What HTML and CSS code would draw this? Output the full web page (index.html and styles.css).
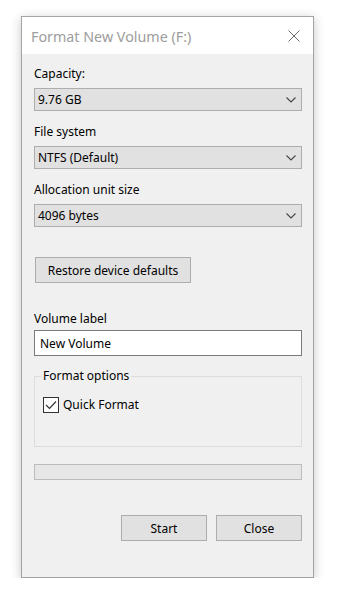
FILE: index.html
```html
<!DOCTYPE html>
<html>
<head>
<meta charset="utf-8">
<link rel="stylesheet" href="styles.css">
</head>
<body>
<div class="stage">
  <div class="window">
    <div class="titlebar">
      <span class="title">Format New Volume (F:)</span>
      <svg class="close-x" width="12" height="12" viewBox="0 0 12 12"><path d="M0.5 0.5 L11.5 11.5 M11.5 0.5 L0.5 11.5" stroke="#6b6b6b" stroke-width="1" fill="none"/></svg>
    </div>
    <div class="content">
      <div class="field">
        <div class="label">Capacity:</div>
        <div class="select"><span>9.76 GB</span><svg class="chev" width="10" height="6" viewBox="0 0 10 6"><path d="M0.5 0.5 L5 5 L9.5 0.5" stroke="#444" stroke-width="1.1" fill="none"/></svg></div>
      </div>
      <div class="field">
        <div class="label">File system</div>
        <div class="select"><span>NTFS (Default)</span><svg class="chev" width="10" height="6" viewBox="0 0 10 6"><path d="M0.5 0.5 L5 5 L9.5 0.5" stroke="#444" stroke-width="1.1" fill="none"/></svg></div>
      </div>
      <div class="field">
        <div class="label">Allocation unit size</div>
        <div class="select"><span>4096 bytes</span><svg class="chev" width="10" height="6" viewBox="0 0 10 6"><path d="M0.5 0.5 L5 5 L9.5 0.5" stroke="#444" stroke-width="1.1" fill="none"/></svg></div>
      </div>
      <div class="btn restore">Restore device defaults</div>
      <div class="label vol-label">Volume label</div>
      <div class="textbox">New Volume</div>
      <fieldset class="group">
        <legend>Format options</legend>
        <div class="check-row">
          <span class="checkbox"><svg width="12" height="10" viewBox="0 0 12 10"><path d="M1 5 L4.5 8.5 L11 1.5" stroke="#333" stroke-width="1.2" fill="none"/></svg></span>
          <span>Quick Format</span>
        </div>
      </fieldset>
      <div class="progress"></div>
      <div class="actions">
        <div class="btn action">Start</div>
        <div class="btn action">Close</div>
      </div>
    </div>
  </div>
</div>
</body>
</html>
```

FILE: styles.css
```css
html, body {
  margin: 0;
  padding: 0;
  background: #ffffff;
}
body {
  font-family: "Noto Sans", "DejaVu Sans", sans-serif;
  font-size: 12px;
  color: #000;
}
.stage {
  padding: 16px 0 0 21px;
}
.window {
  width: 293px;
  height: 562px;
  box-sizing: border-box;
  border: 1px solid #a3a3a3;
  background: #f0f0f0;
  box-shadow: 0 2px 10px rgba(0,0,0,0.22);
}
.titlebar {
  height: 37px;
  background: #ffffff;
  display: flex;
  align-items: center;
  justify-content: space-between;
  padding: 0 13px 0 9px;
}
.title {
  font-size: 14.3px;
  color: #9d9d9d;
  padding-top: 1px;
}
.close-x {
  display: block;
}
.content {
  padding: 12px 11px 0 12px;
  display: flex;
  flex-direction: column;
}
.label {
  line-height: 16px;
  height: 16px;
}
.field {
  display: flex;
  flex-direction: column;
  gap: 6px;
  margin-bottom: 13px;
}
.field:nth-child(3) {
  margin-bottom: 0;
}
.select {
  height: 23px;
  box-sizing: border-box;
  border: 1px solid #adadad;
  background: #e1e1e1;
  display: flex;
  align-items: center;
  justify-content: space-between;
  padding: 0 5px 0 3px;
}
.chev {
  display: block;
}
.btn {
  box-sizing: border-box;
  border: 1px solid #adadad;
  background: #e1e1e1;
  display: flex;
  align-items: center;
  justify-content: center;
}
.restore {
  margin-top: 30px;
  margin-left: 1px;
  width: 156px;
  height: 26px;
}
.vol-label {
  margin-top: 28px;
}
.textbox {
  margin-top: 3px;
  height: 26px;
  box-sizing: border-box;
  border: 1px solid #7a7a7a;
  background: #ffffff;
  display: flex;
  align-items: center;
  padding: 0 5px;
}
.group {
  margin: 12px 0 0 0;
  padding: 0 6px;
  height: 79px;
  box-sizing: border-box;
  border: 1px solid #dcdcdc;
  min-width: 0;
}
.group legend {
  padding: 0 2px;
  line-height: 16px;
}
.check-row {
  margin-top: 12px;
  margin-left: 2px;
  display: flex;
  align-items: center;
  gap: 4px;
}
.checkbox {
  width: 16px;
  height: 16px;
  box-sizing: border-box;
  border: 1px solid #333333;
  background: #ffffff;
  display: flex;
  align-items: center;
  justify-content: center;
}
.checkbox svg {
  display: block;
}
.progress {
  margin-top: 17px;
  height: 16px;
  box-sizing: border-box;
  border: 1px solid #bcbcbc;
  background: #e6e6e6;
}
.actions {
  margin-top: 35px;
  display: flex;
  justify-content: flex-end;
  gap: 9px;
}
.action {
  width: 86px;
  height: 26px;
}
```
